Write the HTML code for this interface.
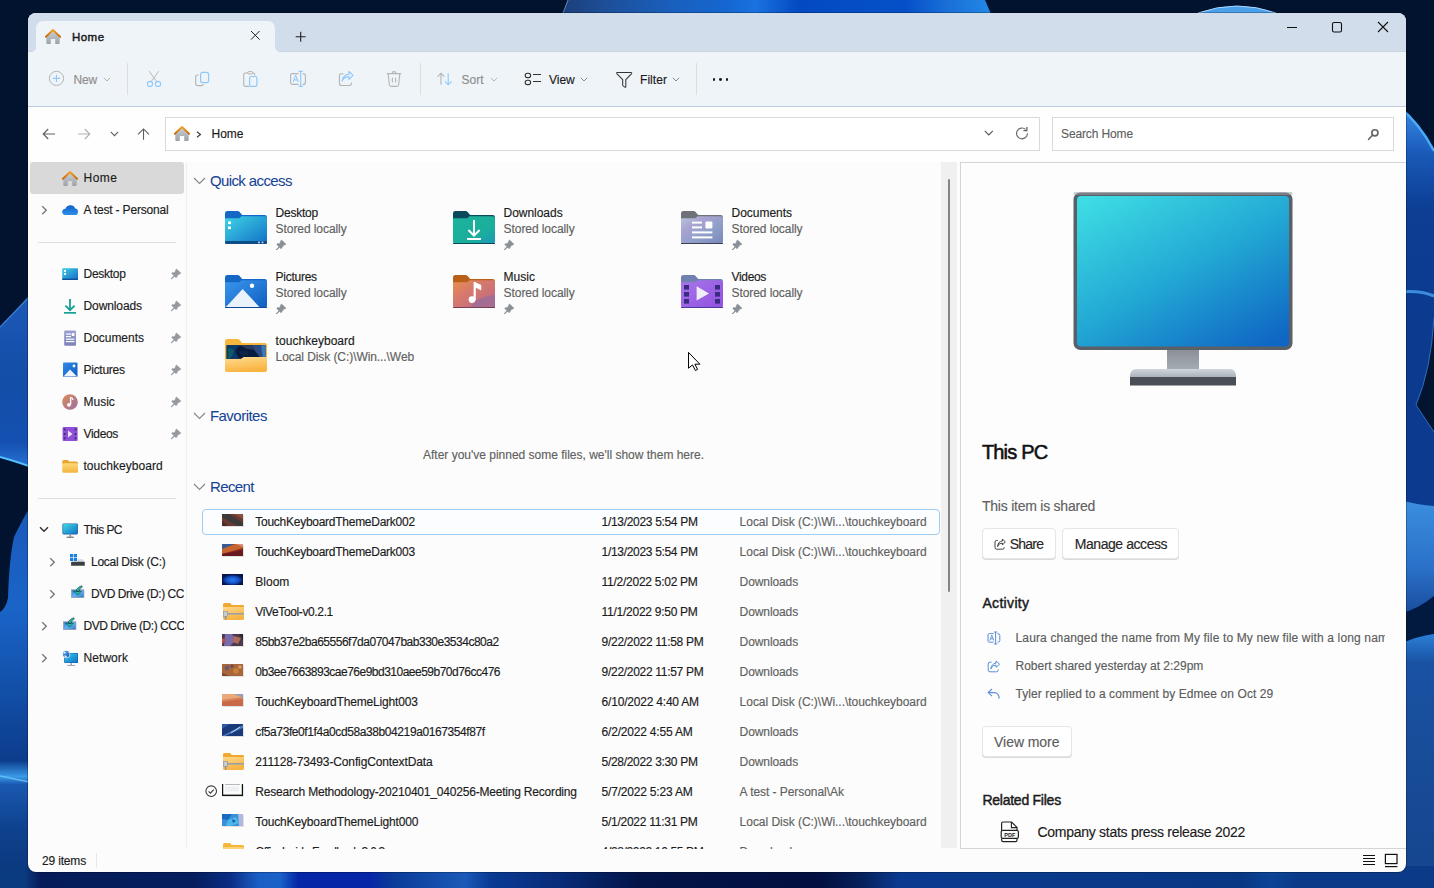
<!DOCTYPE html>
<html><head><meta charset="utf-8">
<style>
*{box-sizing:border-box;margin:0;padding:0}
html,body{width:1434px;height:888px;overflow:hidden}
body{font-family:"Liberation Sans",sans-serif;font-size:12px;color:#1b1b1b;position:relative;background:#021330}
.abs{position:absolute}
#wall{position:absolute;left:0;top:0;width:1434px;height:888px;overflow:hidden;background:#02132f}
#win{position:absolute;left:28px;top:13px;width:1378px;height:859px;border-radius:8px;overflow:hidden;background:#fcfcfc;box-shadow:0 0 0 1px rgba(0,0,0,.25)}
#tabbar{position:absolute;left:0;top:0;width:1378px;height:39px;background:#d1ddeb;border-bottom:1px solid #c9d5e5}
#tab{position:absolute;left:8px;top:7.5px;width:239px;height:32px;background:#eff4f9;border-radius:7px 7px 0 0}
#toolbar{position:absolute;left:0;top:39px;width:1378px;height:55px;background:#eff4f9;border-bottom:1px solid #bdcbdc}
#navrow{position:absolute;left:0;top:94px;width:1378px;height:55px;background:#fefefe}
#addr{position:absolute;left:165px;top:117px;width:875px;height:34px;border:1px solid #d9d9d9;background:#fff}
#search{position:absolute;left:1052px;top:117px;width:342px;height:34px;border:1px solid #d9d9d9;background:#fff}
#sideline{position:absolute;left:186px;top:162px;width:1px;height:686px;background:#efefef}
#sbar{position:absolute;left:941px;top:162px;width:16px;height:686px;background:#f0f0f0}
#details{position:absolute;left:960px;top:162px;width:446px;height:687px;border:1px solid #d4d4d4;border-right:none;background:#fdfdfd}
.clip{position:absolute;overflow:hidden}
.t{position:absolute;white-space:nowrap;line-height:16px;-webkit-text-stroke:0.15px currentColor}
</style></head><body>
<div id="wall"><svg width="1434" height="888" viewBox="0 0 1434 888" style="position:absolute;left:0;top:0">
<defs>
<linearGradient id="wp1" x1="0" y1="0" x2="0" y2="1"><stop offset="0" stop-color="#1d5ab8"/><stop offset=".5" stop-color="#134ea8"/><stop offset=".85" stop-color="#1450b0"/><stop offset="1" stop-color="#2a78d8"/></linearGradient>
<linearGradient id="wp2" x1="0" y1="490" x2="0" y2="888" gradientUnits="userSpaceOnUse"><stop offset="0" stop-color="#1a58b8"/><stop offset=".3" stop-color="#1a64c8"/><stop offset=".5" stop-color="#1250a8"/><stop offset=".68" stop-color="#0c3c8c"/><stop offset=".72" stop-color="#3a9ae8"/><stop offset=".74" stop-color="#1a58b0"/><stop offset=".85" stop-color="#0e428e"/><stop offset="1" stop-color="#0a3478"/></linearGradient>
<linearGradient id="wr1" x1="0" y1="106" x2="0" y2="888" gradientUnits="userSpaceOnUse"><stop offset="0" stop-color="#3a8ee8"/><stop offset=".06" stop-color="#1a5ab8"/><stop offset=".13" stop-color="#0c3e94"/><stop offset=".3" stop-color="#0b3a8e"/><stop offset="1" stop-color="#0b3a90"/></linearGradient>
<linearGradient id="wr2" x1="0" y1="0" x2="0" y2="1"><stop offset="0" stop-color="#3a8ee0"/><stop offset=".6" stop-color="#2a70c8"/><stop offset="1" stop-color="#1a4c9c"/></linearGradient>
<linearGradient id="wr3" x1="0" y1="0" x2="0" y2="1"><stop offset="0" stop-color="#2a80d8"/><stop offset=".12" stop-color="#1a52a2"/><stop offset="1" stop-color="#15468f"/></linearGradient>
<linearGradient id="wtop" x1="563" y1="0" x2="991" y2="0" gradientUnits="userSpaceOnUse"><stop offset="0" stop-color="#1c3f7a"/><stop offset=".1" stop-color="#1d4f98"/><stop offset=".25" stop-color="#1a5fbc"/><stop offset=".38" stop-color="#1466d0"/><stop offset=".45" stop-color="#1a72de"/><stop offset=".55" stop-color="#034ac2"/><stop offset=".8" stop-color="#0550c8"/><stop offset=".9" stop-color="#1a70d8"/><stop offset="1" stop-color="#2288e6"/></linearGradient>
<linearGradient id="wbot" x1="0" y1="0" x2="1434" y2="0" gradientUnits="userSpaceOnUse"><stop offset="0.0000" stop-color="#0a3a80"/><stop offset="0.0174" stop-color="#0a3a80"/><stop offset="0.0279" stop-color="#061c5a"/><stop offset="0.1360" stop-color="#061e5e"/><stop offset="0.1604" stop-color="#0a2c84"/><stop offset="0.1799" stop-color="#1a5ec4"/><stop offset="0.1953" stop-color="#1a62c8"/><stop offset="0.2078" stop-color="#0626a8"/><stop offset="0.2580" stop-color="#0626a8"/><stop offset="0.2720" stop-color="#0a3a98"/><stop offset="0.3243" stop-color="#1a5ab8"/><stop offset="0.3417" stop-color="#0a3a94"/><stop offset="0.3905" stop-color="#082c78"/><stop offset="0.4463" stop-color="#031448"/><stop offset="0.5718" stop-color="#020f40"/><stop offset="0.5997" stop-color="#06205a"/><stop offset="0.6276" stop-color="#0a3a90"/><stop offset="0.6974" stop-color="#0a3a8c"/><stop offset="0.8647" stop-color="#083784"/><stop offset="0.8856" stop-color="#0c4396"/><stop offset="0.9066" stop-color="#0a3a88"/><stop offset="1.0000" stop-color="#0a3a88"/></linearGradient>
</defs>
<rect width="1434" height="888" fill="#02132f"/>
<path d="M563 14 L568 0 H985 L991 14 Z" fill="url(#wtop)"/><path d="M563 13 L568 0" stroke="#7ab8f0" stroke-width="1" opacity=".7"/>
<path d="M1196 14 Q1237 -2 1278 14 Z" fill="#4aa0ea"/><path d="M1198 13 Q1237 -1 1276 13" stroke="#a8d8ff" stroke-width="1" fill="none"/>
<path d="M0 327 Q14 313 40 285 L40 470 Q18 462 0 457 Z" fill="url(#wp1)"/><path d="M0 327 Q14 313 40 285" stroke="#3a80d8" stroke-width="1.2" fill="none"/>
<path d="M0 457 Q18 462 40 470" stroke="#55c0ff" stroke-width="2" fill="none"/>
<path d="M40 490 Q22 520 14 537 Q9 560 8 598 Q6 608 0 612 L0 888 L40 888 Z" fill="url(#wp2)"/>
<path d="M0 776 Q14 779 40 784" stroke="#6ac8f8" stroke-width="1.5" fill="none" opacity=".8"/>
<path d="M1400 106 Q1420 122 1434 150 L1434 888 L1400 888 Z" fill="url(#wr1)"/>
<path d="M1400 108 Q1420 124 1434 151" stroke="#4aa8f8" stroke-width="2.5" fill="none"/>
<path d="M1400 292 Q1420 290 1434 296" stroke="#4aa0f0" stroke-width="3" fill="none" opacity=".8"/>
<path d="M1434 318 Q1431 370 1416 405 L1434 432 Z" fill="#02142f"/><path d="M1434 318 Q1431 370 1416 405 L1434 432" stroke="#3a7ad0" stroke-width="1" fill="none" opacity=".8"/>
<path d="M1400 500 Q1418 505 1434 506 L1434 596 Q1420 608 1400 614 Z" fill="url(#wr2)"/>
<path d="M1400 614 Q1420 608 1434 596 L1434 634 Q1418 636 1400 644 Z" fill="#021a40"/>
<path d="M1400 644 Q1418 636 1434 634 L1434 872 L1400 872 Z" fill="url(#wr3)"/>
<rect x="0" y="866" width="1434" height="22" fill="url(#wbot)"/>
</svg></div>
<div id="win">
  <div id="tabbar"></div>
  <div id="tab"></div>
  <div id="toolbar"></div>
  <div id="navrow"></div>
</div>
<div id="addr"></div>
<div id="search"></div>
<div id="sideline"></div>
<div id="sbar"></div>
<div id="details"></div>
<!-- 01_tabbar.py -->
<svg class="abs" style="left:31px;top:47px;" width="5" height="5" viewBox="0 0 5 5"><path d="M5 0 V5 H0 A5 5 0 0 0 5 0 Z" fill="#eff4f9"/></svg>
<svg class="abs" style="left:275px;top:47px;" width="5" height="5" viewBox="0 0 5 5"><path d="M0 0 V5 H5 A5 5 0 0 1 0 0 Z" fill="#eff4f9"/></svg>
<svg class="abs" style="left:45px;top:28px;" width="16" height="16" viewBox="0 0 16 16"><defs><g id="homeico"><linearGradient id="hroof" x1="0" y1="0" x2="0" y2="1"><stop offset="0" stop-color="#f2a126"/><stop offset="1" stop-color="#c86a0a"/></linearGradient>
<linearGradient id="hbody" x1="0" y1="0" x2="0" y2="1"><stop offset="0" stop-color="#c9cfd6"/><stop offset="1" stop-color="#9ea2a8"/></linearGradient>
<path d="M1.3 9.2 L8 3 L14.7 9.2 V15 Q14.7 16 13.7 16 H10.2 V11 H5.8 V16 H2.3 Q1.3 16 1.3 15 Z" fill="url(#hbody)"/>
<path d="M0.9 8.8 L8 2 L15.1 8.8" stroke="url(#hroof)" stroke-width="1.9" fill="none" stroke-linecap="round" stroke-linejoin="round"/></g></defs><use href="#homeico"/></svg>
<div class="t" style="left:72px;top:30px;font-size:11.5px;line-height:14px;color:#1b1b1b;letter-spacing:0.456px;-webkit-text-stroke:0.45px #1b1b1b">Home</div>
<svg class="abs" style="left:249.5px;top:30px;" width="12" height="12" viewBox="0 0 12 12"><path d="M1 1 L9.6 9.6 M9.6 1 L1 9.6" stroke="#222" stroke-width="1"/></svg>
<svg class="abs" style="left:295px;top:31px;" width="12" height="12" viewBox="0 0 12 12"><path d="M5.7 0.8 V10.8 M0.7 5.8 H10.7" stroke="#222" stroke-width="1.1"/></svg>
<div class="abs" style="left:1287px;top:27px;width:10px;height:1.2px;background:#111"></div>
<svg class="abs" style="left:1331px;top:21px;" width="12" height="12" viewBox="0 0 12 12"><rect x="1.5" y="1.5" width="9" height="9.5" rx="1.6" fill="none" stroke="#111" stroke-width="1.1"/></svg>
<svg class="abs" style="left:1377px;top:21px;" width="12" height="12" viewBox="0 0 12 12"><path d="M1 1 L11 11 M11 1 L1 11" stroke="#111" stroke-width="1.1"/></svg>
<!-- 02_toolbar.py -->
<svg class="abs" style="left:48px;top:70px;" width="17" height="17" viewBox="0 0 17 17"><circle cx="8.5" cy="8.4" r="7.1" fill="none" stroke="#b4b4b4" stroke-width="1"/><path d="M8.5 4.8 V12 M4.9 8.4 H12.1" stroke="#8fc8fb" stroke-width="1.1"/></svg>
<div class="t" style="left:73.5px;top:73px;font-size:12px;line-height:15px;color:#8e8e8e;letter-spacing:-0.169px;">New</div>
<svg class="abs" style="left:103px;top:77px;" width="8" height="5" viewBox="0 0 8 5"><path d="M0.8 0.8 L4 4 L7.2 0.8" fill="none" stroke="#b5b5b5" stroke-width="1"/></svg>
<div class="abs" style="left:127px;top:63px;width:1px;height:32px;background:#dedede"></div>
<svg class="abs" style="left:146px;top:70px;" width="16" height="17" viewBox="0 0 16 17"><path d="M3.2 1.2 L11.3 12.3 M12.7 1.2 L4.7 12.3" stroke="#b9b9b9" stroke-width="1"/><circle cx="4" cy="14" r="2.6" fill="none" stroke="#8fc8fb" stroke-width="1.1"/><circle cx="12" cy="14" r="2.6" fill="none" stroke="#8fc8fb" stroke-width="1.1"/></svg>
<svg class="abs" style="left:194px;top:70px;" width="17" height="17" viewBox="0 0 17 17"><path d="M4.5 5 H3.6 Q1.7 5 1.7 7 V13.4 Q1.7 15.6 4 15.6 H7.6 Q9.3 15.6 9.6 14" fill="none" stroke="#b4b4b4" stroke-width="1.1"/><rect x="6.6" y="2.4" width="8" height="10.2" rx="2" fill="none" stroke="#8fc8fb" stroke-width="1.2"/></svg>
<svg class="abs" style="left:242px;top:70px;" width="17" height="18" viewBox="0 0 17 18"><path d="M6 3 H3.4 Q1.7 3 1.7 4.8 V14.8 Q1.7 16.4 3.4 16.4 H7" fill="none" stroke="#b4b4b4" stroke-width="1.1"/><path d="M10.5 3 H11.2 Q12.7 3 12.7 4.6 V5.6" fill="none" stroke="#b4b4b4" stroke-width="1.1"/><rect x="5.8" y="1.6" width="5" height="2.4" rx="1.1" fill="none" stroke="#b4b4b4" stroke-width="1"/><rect x="7.6" y="6.5" width="7.3" height="9.9" rx="1.6" fill="none" stroke="#8fc8fb" stroke-width="1.2"/></svg>
<svg class="abs" style="left:289px;top:70px;" width="18" height="18" viewBox="0 0 18 18"><path d="M9.5 3.6 H3.2 Q1.6 3.6 1.6 5.2 V12.6 Q1.6 14.4 3.3 14.4 H9.5 M13.7 3.6 Q16.4 3.6 16.4 5.6 V12.4 Q16.4 14.4 14.2 14.4 H13.7" fill="none" stroke="#b4b4b4" stroke-width="1.1"/><path d="M11.7 1.4 V16.4 M9.6 1.4 H13.8 M9.6 16.4 H13.8" stroke="#8fc8fb" stroke-width="1.1"/><path d="M4 12 L6.6 5.2 L9.2 12 M4.9 9.9 H8.3" fill="none" stroke="#8fc8fb" stroke-width="1"/></svg>
<svg class="abs" style="left:337px;top:70px;" width="18" height="18" viewBox="0 0 18 18"><path d="M6.5 3.7 H4.4 Q2.4 3.7 2.4 5.8 V13.2 Q2.4 15.5 4.6 15.5 H12.2 Q14.6 15.5 14.6 13 V12.4" fill="none" stroke="#b4b4b4" stroke-width="1.1"/><path d="M5.1 11.2 Q6.2 7 12 6.6 V9.4 L16 5.3 L12 1.3 V4.1 Q6 4.6 5.1 11.2 Z" fill="none" stroke="#8fc8fb" stroke-width="1.1" stroke-linejoin="round"/></svg>
<svg class="abs" style="left:386px;top:70px;" width="16" height="18" viewBox="0 0 16 18"><path d="M0.8 3.6 H15.2 M6.2 3.4 Q6.2 1.6 8 1.6 Q9.8 1.6 9.8 3.4" fill="none" stroke="#b4b4b4" stroke-width="1.1"/><path d="M2.2 3.8 L3.3 14.8 Q3.5 16.4 5 16.4 H11 Q12.5 16.4 12.7 14.8 L13.8 3.8" fill="none" stroke="#b4b4b4" stroke-width="1.1"/><path d="M6.4 7.8 V12.6 M9.6 7.8 V12.6" stroke="#b4b4b4" stroke-width="1.1"/></svg>
<div class="abs" style="left:420px;top:63px;width:1px;height:32px;background:#dedede"></div>
<svg class="abs" style="left:435px;top:70px;" width="19" height="17" viewBox="0 0 19 17"><path d="M6 14.8 V3.2 M2.6 6.6 L6 3.2 L9.4 6.6" fill="none" stroke="#b4b4b4" stroke-width="1.1"/><path d="M13.2 3.2 V14.8 M9.8 11.4 L13.2 14.8 L16.6 11.4" fill="none" stroke="#8fc8fb" stroke-width="1.1"/></svg>
<div class="t" style="left:461.5px;top:73px;font-size:12px;line-height:15px;color:#8e8e8e;letter-spacing:-0.002px;">Sort</div>
<svg class="abs" style="left:489.5px;top:77px;" width="8" height="5" viewBox="0 0 8 5"><path d="M0.8 0.8 L4 4 L7.2 0.8" fill="none" stroke="#b5b5b5" stroke-width="1"/></svg>
<svg class="abs" style="left:523px;top:70px;" width="20" height="16" viewBox="0 0 20 16"><rect x="2.2" y="3.2" width="5.4" height="4.4" rx="2.2" fill="none" stroke="#333" stroke-width="1.1"/><rect x="2.2" y="10.2" width="5.4" height="4.4" rx="2.2" fill="none" stroke="#333" stroke-width="1.1"/><path d="M10 4.5 H18 M10 11.5 H18" stroke="#333" stroke-width="1"/></svg>
<div class="t" style="left:549px;top:73px;font-size:12px;line-height:15px;color:#1b1b1b;letter-spacing:-0.024px;">View</div>
<svg class="abs" style="left:580px;top:77px;" width="8" height="5" viewBox="0 0 8 5"><path d="M0.8 0.8 L4 4 L7.2 0.8" fill="none" stroke="#8a8a8a" stroke-width="1"/></svg>
<svg class="abs" style="left:615px;top:71px;" width="19" height="18" viewBox="0 0 19 18"><path d="M2.4 1.4 H15.6 Q17.4 1.4 16.4 2.8 L10.8 8.6 V15.6 Q10.8 16.6 9.9 16.1 L8.3 15.1 Q7.7 14.7 7.7 14 V8.6 L2 2.8 Q1 1.4 2.4 1.4 Z" fill="none" stroke="#333" stroke-width="1.05" stroke-linejoin="round"/></svg>
<div class="t" style="left:640px;top:73px;font-size:12px;line-height:15px;color:#1b1b1b;letter-spacing:0.055px;">Filter</div>
<svg class="abs" style="left:672px;top:77px;" width="8" height="5" viewBox="0 0 8 5"><path d="M0.8 0.8 L4 4 L7.2 0.8" fill="none" stroke="#8a8a8a" stroke-width="1"/></svg>
<div class="abs" style="left:696px;top:63px;width:1px;height:32px;background:#dedede"></div>
<div class="abs" style="left:712.6px;top:78.2px;width:2.8px;height:2.8px;background:#1a1a1a;border-radius:50%"></div>
<div class="abs" style="left:719.1px;top:78.2px;width:2.8px;height:2.8px;background:#1a1a1a;border-radius:50%"></div>
<div class="abs" style="left:725.6px;top:78.2px;width:2.8px;height:2.8px;background:#1a1a1a;border-radius:50%"></div>
<!-- 03_navrow.py -->
<svg class="abs" style="left:42px;top:128px;" width="14" height="12" viewBox="0 0 14 12"><path d="M1.2 6 H13 M6.2 1 L1.2 6 L6.2 11" fill="none" stroke="#5e5e5e" stroke-width="1.1"/></svg>
<svg class="abs" style="left:77px;top:128px;" width="14" height="12" viewBox="0 0 14 12"><path d="M1 6 H12.8 M7.8 1 L12.8 6 L7.8 11" fill="none" stroke="#aeb1b4" stroke-width="1.1"/></svg>
<svg class="abs" style="left:110px;top:131px;" width="9" height="6" viewBox="0 0 9 6"><path d="M0.8 0.8 L4.5 4.6 L8.2 0.8" fill="none" stroke="#5e5e5e" stroke-width="1.1"/></svg>
<svg class="abs" style="left:137px;top:128px;" width="13" height="12" viewBox="0 0 13 12"><path d="M6.5 11.8 V1 M1 6.3 L6.5 0.9 L12 6.3" fill="none" stroke="#5e5e5e" stroke-width="1.1"/></svg>
<svg class="abs" style="left:174px;top:125px;" width="16" height="16" viewBox="0 0 16 16"><use href="#homeico"/></svg>
<svg class="abs" style="left:196px;top:131px;" width="6" height="7" viewBox="0 0 6 7"><path d="M1 0.8 L4.4 3.5 L1 6.2" fill="none" stroke="#444" stroke-width="1.3"/></svg>
<div class="t" style="left:211.5px;top:127px;font-size:12px;line-height:15px;color:#1b1b1b;letter-spacing:-0.003px;">Home</div>
<svg class="abs" style="left:984px;top:130px;" width="10" height="7" viewBox="0 0 10 7"><path d="M0.8 0.8 L4.8 5 L8.8 0.8" fill="none" stroke="#555" stroke-width="1.1"/></svg>
<svg class="abs" style="left:1015px;top:126px;" width="15" height="15" viewBox="0 0 15 15"><path d="M12.4 7.2 A5.4 5.4 0 1 1 10.6 3.4" fill="none" stroke="#666" stroke-width="1.15"/><path d="M11.9 1 V4.6 H8.4" fill="none" stroke="#666" stroke-width="1.3"/></svg>
<div class="t" style="left:1061px;top:127px;font-size:12px;line-height:15px;color:#5f5f5f;letter-spacing:-0.124px;">Search Home</div>
<svg class="abs" style="left:1366px;top:127px;" width="14" height="14" viewBox="0 0 14 14"><circle cx="8.9" cy="5.8" r="3.05" fill="none" stroke="#666" stroke-width="1.7"/><path d="M6.7 8 L2.6 12.3" stroke="#666" stroke-width="1.6" stroke-linecap="round"/></svg>
<!-- 04_sidebar.py -->
<div class="abs" style="left:0;top:0;width:1434px;height:888px;clip-path:inset(162px 1250px 40px 28px)"><div class="abs" style="left:30px;top:162px;width:154px;height:32px;background:#d9d9d9;border-radius:3px"></div>
<svg class="abs" style="left:62px;top:170px;" width="16" height="16" viewBox="0 0 16 16"><use href="#homeico"/></svg>
<div class="t" style="left:83.5px;top:171px;font-size:12px;line-height:15px;color:#1b1b1b;letter-spacing:0.497px;">Home</div>
<svg class="abs" style="left:41px;top:205px;" width="8" height="11" viewBox="0 0 8 11"><path d="M1.3 1.2 L5.3 5.2 L1.3 9.2" fill="none" stroke="#767676" stroke-width="1.3"/></svg>
<svg class="abs" style="left:62px;top:201px;" width="16" height="16" viewBox="0 0 16 16"><defs><linearGradient id="cl1" x1="0" y1="0" x2="0" y2="1"><stop offset="0" stop-color="#0f5fc8"/><stop offset="1" stop-color="#2f8fea"/></linearGradient></defs><path d="M4 14 Q0.2 14 0.2 10.9 Q0.2 8 3.4 7.8 Q4.6 4.3 8.6 4.3 Q12 4.3 13.1 7.6 Q16 8 16 10.9 Q16 14 13 14 Z" fill="url(#cl1)"/></svg>
<div class="t" style="left:83.5px;top:203px;font-size:12px;line-height:15px;color:#1b1b1b;letter-spacing:-0.179px;">A test - Personal</div>
<svg class="abs" style="left:62px;top:266px;" width="16" height="16" viewBox="0 0 16 16"><defs><linearGradient id="dk1" x1="0" y1="0" x2="1" y2="1"><stop offset="0" stop-color="#3cd0e6"/><stop offset="1" stop-color="#1a68c6"/></linearGradient></defs><rect x="0.2" y="2.2" width="15.8" height="11.8" rx="1.2" fill="url(#dk1)"/><rect x="0.2" y="12.6" width="15.8" height="1.4" fill="#0f4f9a"/><rect x="2" y="4" width="2" height="1.8" fill="#fff"/><rect x="2" y="7" width="2" height="1.8" fill="#fff"/></svg>
<div class="t" style="left:83.5px;top:267px;font-size:12px;line-height:15px;color:#1b1b1b;letter-spacing:-0.260px;">Desktop</div>
<svg class="abs" style="left:171px;top:268px;" width="11" height="12" viewBox="0 0 11 12"><path d="M5.6 1 L10 5.2 L7.4 6.6 L5.4 9.6 L4.6 9.4 L0.8 5.5 L1 4.8 L3.9 4.4 L4.6 2 Z" fill="#949a9f" stroke="#949a9f" stroke-width=".5" stroke-linejoin="round"/><path d="M3.6 7.6 L0.6 10.6" stroke="#949a9f" stroke-width="1.3" stroke-linecap="round"/></svg>
<svg class="abs" style="left:62px;top:298px;" width="16" height="16" viewBox="0 0 16 16"><path d="M8 1 V12 M3.4 7.6 L8 12.2 L12.6 7.6" fill="none" stroke="#17a192" stroke-width="1.8"/><rect x="2" y="14" width="12" height="1.7" fill="#17a192"/></svg>
<div class="t" style="left:83.5px;top:299px;font-size:12px;line-height:15px;color:#1b1b1b;letter-spacing:-0.097px;">Downloads</div>
<svg class="abs" style="left:171px;top:300px;" width="11" height="12" viewBox="0 0 11 12"><path d="M5.6 1 L10 5.2 L7.4 6.6 L5.4 9.6 L4.6 9.4 L0.8 5.5 L1 4.8 L3.9 4.4 L4.6 2 Z" fill="#949a9f" stroke="#949a9f" stroke-width=".5" stroke-linejoin="round"/><path d="M3.6 7.6 L0.6 10.6" stroke="#949a9f" stroke-width="1.3" stroke-linecap="round"/></svg>
<svg class="abs" style="left:62px;top:330px;" width="16" height="16" viewBox="0 0 16 16"><defs><linearGradient id="dc1" x1="0" y1="0" x2="0" y2="1"><stop offset="0" stop-color="#9aa0d0"/><stop offset="1" stop-color="#7b82b8"/></linearGradient></defs><rect x="2.2" y="0.5" width="11.8" height="15.3" rx="1.2" fill="url(#dc1)"/><rect x="4" y="3.5" width="5" height="1.2" fill="#fff"/><rect x="9.8" y="3" width="2.6" height="3" fill="#fff"/><rect x="4" y="6" width="5" height="1.2" fill="#fff"/><rect x="4" y="8.6" width="8.4" height="1.2" fill="#fff"/><rect x="4" y="11" width="8.4" height="1.2" fill="#fff"/></svg>
<div class="t" style="left:83.5px;top:331px;font-size:12px;line-height:15px;color:#1b1b1b;letter-spacing:-0.033px;">Documents</div>
<svg class="abs" style="left:171px;top:332px;" width="11" height="12" viewBox="0 0 11 12"><path d="M5.6 1 L10 5.2 L7.4 6.6 L5.4 9.6 L4.6 9.4 L0.8 5.5 L1 4.8 L3.9 4.4 L4.6 2 Z" fill="#949a9f" stroke="#949a9f" stroke-width=".5" stroke-linejoin="round"/><path d="M3.6 7.6 L0.6 10.6" stroke="#949a9f" stroke-width="1.3" stroke-linecap="round"/></svg>
<svg class="abs" style="left:62px;top:362px;" width="16" height="16" viewBox="0 0 16 16"><defs><linearGradient id="pc1" x1="0" y1="0" x2="1" y2="1"><stop offset="0" stop-color="#2f8ae8"/><stop offset="1" stop-color="#105cc0"/></linearGradient></defs><rect x="1" y="0.6" width="14.5" height="14.5" rx="1" fill="url(#pc1)"/><path d="M1.5 14.6 L8 7.4 L15 14.6 Z" fill="#eef4fb"/><circle cx="12" cy="4" r="1.4" fill="#fff"/></svg>
<div class="t" style="left:83.5px;top:363px;font-size:12px;line-height:15px;color:#1b1b1b;letter-spacing:-0.269px;">Pictures</div>
<svg class="abs" style="left:171px;top:364px;" width="11" height="12" viewBox="0 0 11 12"><path d="M5.6 1 L10 5.2 L7.4 6.6 L5.4 9.6 L4.6 9.4 L0.8 5.5 L1 4.8 L3.9 4.4 L4.6 2 Z" fill="#949a9f" stroke="#949a9f" stroke-width=".5" stroke-linejoin="round"/><path d="M3.6 7.6 L0.6 10.6" stroke="#949a9f" stroke-width="1.3" stroke-linecap="round"/></svg>
<svg class="abs" style="left:62px;top:394px;" width="16" height="16" viewBox="0 0 16 16"><defs><linearGradient id="mu1" x1="0" y1="0" x2="1" y2="1"><stop offset="0" stop-color="#e08a55"/><stop offset="1" stop-color="#9a6fa8"/></linearGradient></defs><circle cx="8" cy="8" r="7.8" fill="url(#mu1)"/><path d="M8.6 3.2 V10.6" stroke="#fff" stroke-width="1.4"/><path d="M8.6 3.2 Q11 4 11 6" stroke="#fff" stroke-width="1.2" fill="none"/><circle cx="6.9" cy="10.8" r="1.9" fill="#fff"/></svg>
<div class="t" style="left:83.5px;top:395px;font-size:12px;line-height:15px;color:#1b1b1b;letter-spacing:-0.007px;">Music</div>
<svg class="abs" style="left:171px;top:396px;" width="11" height="12" viewBox="0 0 11 12"><path d="M5.6 1 L10 5.2 L7.4 6.6 L5.4 9.6 L4.6 9.4 L0.8 5.5 L1 4.8 L3.9 4.4 L4.6 2 Z" fill="#949a9f" stroke="#949a9f" stroke-width=".5" stroke-linejoin="round"/><path d="M3.6 7.6 L0.6 10.6" stroke="#949a9f" stroke-width="1.3" stroke-linecap="round"/></svg>
<svg class="abs" style="left:62px;top:426px;" width="16" height="16" viewBox="0 0 16 16"><rect x="0.6" y="1" width="15" height="14" rx="1" fill="#8e4fd8"/><g fill="#3a2a6a"><rect x="1.8" y="2.6" width="1.8" height="1.8"/><rect x="1.8" y="7" width="1.8" height="1.8"/><rect x="1.8" y="11.4" width="1.8" height="1.8"/><rect x="12.6" y="2.6" width="1.8" height="1.8"/><rect x="12.6" y="7" width="1.8" height="1.8"/><rect x="12.6" y="11.4" width="1.8" height="1.8"/></g><path d="M6 4.6 L10.6 8 L6 11.4 Z" fill="#e9e4f8"/></svg>
<div class="t" style="left:83.5px;top:427px;font-size:12px;line-height:15px;color:#1b1b1b;letter-spacing:-0.329px;">Videos</div>
<svg class="abs" style="left:171px;top:428px;" width="11" height="12" viewBox="0 0 11 12"><path d="M5.6 1 L10 5.2 L7.4 6.6 L5.4 9.6 L4.6 9.4 L0.8 5.5 L1 4.8 L3.9 4.4 L4.6 2 Z" fill="#949a9f" stroke="#949a9f" stroke-width=".5" stroke-linejoin="round"/><path d="M3.6 7.6 L0.6 10.6" stroke="#949a9f" stroke-width="1.3" stroke-linecap="round"/></svg>
<svg class="abs" style="left:62px;top:458px;" width="16" height="16" viewBox="0 0 16 16"><defs><linearGradient id="fo1" x1="0" y1="0" x2="0" y2="1"><stop offset="0" stop-color="#ffd978"/><stop offset="1" stop-color="#f3b43e"/></linearGradient></defs><path d="M0.3 3.6 Q0.3 2 1.8 2 H5.6 L7.2 3.4 H14.4 Q16 3.4 16 5 V6 H0.3 Z" fill="#e8a52c"/><rect x="0.3" y="5.2" width="15.7" height="9.6" rx="1.2" fill="url(#fo1)"/></svg>
<div class="t" style="left:83.5px;top:459px;font-size:12px;line-height:15px;color:#1b1b1b;letter-spacing:0.037px;">touchkeyboard</div>
<svg class="abs" style="left:39px;top:526px;" width="10" height="7" viewBox="0 0 10 7"><path d="M1 1.2 L5 5.2 L9 1.2" fill="none" stroke="#333" stroke-width="1.4"/></svg>
<svg class="abs" style="left:62px;top:523px;" width="16" height="16" viewBox="0 0 16 16"><defs><linearGradient id="tp1" x1="0" y1="0" x2="1" y2="1"><stop offset="0" stop-color="#3dd6e2"/><stop offset="1" stop-color="#1372c8"/></linearGradient></defs><rect x="0.4" y="0.4" width="15.5" height="11" rx="1.4" fill="#1d5aa6"/><rect x="1.1" y="1.1" width="14.1" height="9.6" rx=".6" fill="url(#tp1)"/><rect x="7.2" y="11.4" width="2" height="2.4" fill="#9aa0a6"/><rect x="4.6" y="13.6" width="7.2" height="1.4" fill="#7d848c"/></svg>
<div class="t" style="left:83.5px;top:523px;font-size:12px;line-height:15px;color:#1b1b1b;letter-spacing:-0.611px;">This PC</div>
<svg class="abs" style="left:49px;top:557px;" width="8" height="11" viewBox="0 0 8 11"><path d="M1.3 1.2 L5.3 5.2 L1.3 9.2" fill="none" stroke="#767676" stroke-width="1.3"/></svg>
<svg class="abs" style="left:70px;top:554px;" width="16" height="16" viewBox="0 0 16 16"><g fill="#1a7fe0"><rect x="0" y="0" width="3.2" height="3.2"/><rect x="3.8" y="0" width="3.2" height="3.2"/><rect x="0" y="3.8" width="3.2" height="3.2"/><rect x="3.8" y="3.8" width="3.2" height="3.2"/></g><path d="M7.4 5.2 H12.8 L14.4 7.8 H7.4 Z" fill="#d4d8dc"/><rect x="1.1" y="7.7" width="13.7" height="4" rx=".5" fill="#3a3f44"/></svg>
<div class="t" style="left:91px;top:555px;font-size:12px;line-height:15px;color:#1b1b1b;letter-spacing:-0.279px;">Local Disk (C:)</div>
<svg class="abs" style="left:49px;top:589px;" width="8" height="11" viewBox="0 0 8 11"><path d="M1.3 1.2 L5.3 5.2 L1.3 9.2" fill="none" stroke="#767676" stroke-width="1.3"/></svg>
<svg class="abs" style="left:71px;top:585px;" width="16" height="16" viewBox="0 0 16 16"><defs><linearGradient id="dv1" x1="0" y1="0" x2="1" y2="1"><stop offset="0" stop-color="#2f7fd8"/><stop offset=".5" stop-color="#62b0f0"/><stop offset="1" stop-color="#2a72c8"/></linearGradient></defs><rect x="0.5" y="4.8" width="12.4" height="7.8" fill="url(#dv1)" stroke="#8a9aa8" stroke-width=".7"/><path d="M2.6 6.2 L10.4 6.2 L6.5 10.1 Z M5.2 6.5 Q5.4 2.2 10.9 0.8 L11.3 2.3 Q8.2 3 7.8 6.5 Z" fill="#1fbcac" stroke="#16383a" stroke-width=".6" stroke-linejoin="round"/></svg>
<div class="t" style="left:91px;top:587px;font-size:12px;line-height:15px;color:#1b1b1b;letter-spacing:-0.450px;">DVD Drive (D:) CCCOMA_X64FRE_EN-US_DV9</div>
<svg class="abs" style="left:41px;top:621px;" width="8" height="11" viewBox="0 0 8 11"><path d="M1.3 1.2 L5.3 5.2 L1.3 9.2" fill="none" stroke="#767676" stroke-width="1.3"/></svg>
<svg class="abs" style="left:63px;top:617px;" width="16" height="16" viewBox="0 0 16 16"><defs><linearGradient id="dv1" x1="0" y1="0" x2="1" y2="1"><stop offset="0" stop-color="#2f7fd8"/><stop offset=".5" stop-color="#62b0f0"/><stop offset="1" stop-color="#2a72c8"/></linearGradient></defs><rect x="0.5" y="4.8" width="12.4" height="7.8" fill="url(#dv1)" stroke="#8a9aa8" stroke-width=".7"/><path d="M2.6 6.2 L10.4 6.2 L6.5 10.1 Z M5.2 6.5 Q5.4 2.2 10.9 0.8 L11.3 2.3 Q8.2 3 7.8 6.5 Z" fill="#1fbcac" stroke="#16383a" stroke-width=".6" stroke-linejoin="round"/></svg>
<div class="t" style="left:83.5px;top:619px;font-size:12px;line-height:15px;color:#1b1b1b;letter-spacing:-0.450px;">DVD Drive (D:) CCCOMA_X64FRE_EN-US_DV9</div>
<svg class="abs" style="left:41px;top:653px;" width="8" height="11" viewBox="0 0 8 11"><path d="M1.3 1.2 L5.3 5.2 L1.3 9.2" fill="none" stroke="#767676" stroke-width="1.3"/></svg>
<svg class="abs" style="left:62px;top:650px;" width="16" height="16" viewBox="0 0 16 16"><defs><linearGradient id="nw1" x1="0" y1="0" x2="1" y2="1"><stop offset="0" stop-color="#2ccbe6"/><stop offset="1" stop-color="#1274cc"/></linearGradient><linearGradient id="nw2" x1="0" y1="0" x2="1" y2="1"><stop offset="0" stop-color="#6ab0f0"/><stop offset=".5" stop-color="#3a84d8"/><stop offset="1" stop-color="#1a4a9a"/></linearGradient></defs><rect x="2.2" y="2.9" width="14" height="10.2" rx="1.1" fill="#1a58a8"/><rect x="2.9" y="3.6" width="12.6" height="8.8" rx=".6" fill="url(#nw1)"/><rect x="8.4" y="13.1" width="1.6" height="2.1" fill="#9aa4ae"/><rect x="5.2" y="14.9" width="8" height="1" fill="#9aa4ae"/><circle cx="4.2" cy="4.1" r="4.1" fill="#fcfcfc"/><circle cx="4.2" cy="4.1" r="3.4" fill="url(#nw2)"/><path d="M1.6 2.4 Q3 1.2 4 2.4 Q3.2 3.6 1.4 3.6 Z M2.4 5.6 Q4 5 5 6.6 Q4 7.6 2.6 6.8 Z M5.6 1.4 Q6.8 2 7 3 Q6 3 5.6 1.4 Z" fill="#e8f4ff"/></svg>
<div class="t" style="left:83.5px;top:651px;font-size:12px;line-height:15px;color:#1b1b1b;letter-spacing:0.070px;">Network</div>
</div><div class="abs" style="left:38px;top:242px;width:138px;height:1px;background:#dedede"></div>
<div class="abs" style="left:38px;top:498px;width:138px;height:1px;background:#dedede"></div>
<!-- 05_quick.py -->
<svg class="abs" style="left:193px;top:177px;" width="13" height="8" viewBox="0 0 13 8"><path d="M1 1 L6.5 6.5 L12 1" fill="none" stroke="#858585" stroke-width="1.1"/></svg>
<div class="t" style="left:209.9px;top:171px;font-size:15px;line-height:19px;color:#174396;letter-spacing:-0.600px;-webkit-text-stroke:0.05px currentColor">Quick access</div>
<svg class="abs" style="left:193px;top:412px;" width="13" height="8" viewBox="0 0 13 8"><path d="M1 1 L6.5 6.5 L12 1" fill="none" stroke="#858585" stroke-width="1.1"/></svg>
<div class="t" style="left:209.9px;top:406px;font-size:15px;line-height:19px;color:#174396;letter-spacing:-0.521px;-webkit-text-stroke:0.05px currentColor">Favorites</div>
<svg class="abs" style="left:193px;top:483px;" width="13" height="8" viewBox="0 0 13 8"><path d="M1 1 L6.5 6.5 L12 1" fill="none" stroke="#858585" stroke-width="1.1"/></svg>
<div class="t" style="left:209.9px;top:477px;font-size:15px;line-height:19px;color:#174396;letter-spacing:-0.588px;-webkit-text-stroke:0.05px currentColor">Recent</div>
<svg class="abs" style="left:225px;top:211px" width="42" height="33" viewBox="0 0 42 33"><defs><linearGradient id="qd" x1="0" y1="0" x2="1" y2="1"><stop offset="0" stop-color="#40d4e6"/><stop offset="1" stop-color="#1170c6"/></linearGradient></defs><path d="M0 2.4 Q0 0 2.4 0 H12.6 Q13.8 0 14.6 0.9 L17.2 4 H39.6 Q42 4 42 6.4 V12 H0 Z" fill="#1467c4"/><path d="M0 7.2 H14.2 L16.6 5.2 H39.8 Q42 5.2 42 7.4 V30.6 Q42 33 39.6 33 H2.4 Q0 33 0 30.6 Z" fill="url(#qd)"/><rect x="0" y="30" width="42" height="3" rx="1" fill="#0d4e86"/><rect x="3" y="10.5" width="3" height="2.6" fill="#fff"/><rect x="3" y="15.5" width="3" height="2.6" fill="#fff"/><rect x="33" y="30.6" width="1.8" height="1.6" fill="#cfd8ff"/><rect x="36.6" y="30.6" width="1.8" height="1.6" fill="#cfd8ff"/></svg>
<svg class="abs" style="left:453px;top:211px" width="42" height="33" viewBox="0 0 42 33"><defs><linearGradient id="qdl" x1="0" y1="0" x2="1" y2="1"><stop offset="0" stop-color="#1cb39c"/><stop offset="0.65" stop-color="#1aae9c"/><stop offset="1" stop-color="#1f96b8"/></linearGradient></defs><path d="M0 2.4 Q0 0 2.4 0 H12.6 Q13.8 0 14.6 0.9 L17.2 4 H39.6 Q42 4 42 6.4 V12 H0 Z" fill="#0b4a5e"/><path d="M0 7.2 H14.2 L16.6 5.2 H39.8 Q42 5.2 42 7.4 V30.6 Q42 33 39.6 33 H2.4 Q0 33 0 30.6 Z" fill="url(#qdl)"/><rect x="0" y="32" width="42" height="1" fill="#0b4a5e"/><path d="M21 9 V24.6 M15.4 19 L21 24.6 L26.6 19" fill="none" stroke="#fff" stroke-width="2"/><rect x="14" y="27" width="14" height="2" fill="#fff"/></svg>
<svg class="abs" style="left:681px;top:211px" width="42" height="33" viewBox="0 0 42 33"><defs><linearGradient id="qdc" x1="0" y1="0" x2="1" y2="1"><stop offset="0" stop-color="#b9c6dc"/><stop offset="0.3" stop-color="#a9a2d2"/><stop offset="0.6" stop-color="#8fa0c8"/><stop offset="1" stop-color="#7a86bc"/></linearGradient></defs><path d="M0 2.4 Q0 0 2.4 0 H12.6 Q13.8 0 14.6 0.9 L17.2 4 H39.6 Q42 4 42 6.4 V12 H0 Z" fill="#6e7178"/><path d="M0 7.2 H14.2 L16.6 5.2 H39.8 Q42 5.2 42 7.4 V30.6 Q42 33 39.6 33 H2.4 Q0 33 0 30.6 Z" fill="url(#qdc)"/><rect x="0" y="32" width="42" height="1" fill="#3c4250"/><g fill="#fff"><rect x="11" y="10.6" width="10" height="2"/><rect x="24.4" y="10.6" width="7" height="6.8" rx="1"/><rect x="11" y="15.4" width="10" height="2"/><rect x="11" y="20.4" width="20.4" height="2"/><rect x="11" y="25.4" width="20.4" height="2"/></g></svg>
<svg class="abs" style="left:225px;top:275px" width="42" height="33" viewBox="0 0 42 33"><defs><linearGradient id="qp" x1="0" y1="0" x2="1" y2="1"><stop offset="0" stop-color="#3a96ec"/><stop offset="1" stop-color="#0f5ec0"/></linearGradient></defs><path d="M0 2.4 Q0 0 2.4 0 H12.6 Q13.8 0 14.6 0.9 L17.2 4 H39.6 Q42 4 42 6.4 V12 H0 Z" fill="#1467c4"/><path d="M0 7.2 H14.2 L16.6 5.2 H39.8 Q42 5.2 42 7.4 V30.6 Q42 33 39.6 33 H2.4 Q0 33 0 30.6 Z" fill="url(#qp)"/><path d="M1 32 L17.6 14 L34.4 32 Z" fill="#eaf2fb"/><circle cx="27" cy="10.8" r="2.2" fill="#fff"/><rect x="0" y="32" width="42" height="1" fill="#0c4a98"/></svg>
<svg class="abs" style="left:453px;top:275px" width="42" height="33" viewBox="0 0 42 33"><defs><linearGradient id="qm" x1="0" y1="0" x2="1" y2="1"><stop offset="0" stop-color="#e89050"/><stop offset="0.35" stop-color="#d87a6a"/><stop offset="0.7" stop-color="#c8707a"/><stop offset="1" stop-color="#9a6aa0"/></linearGradient></defs><path d="M0 2.4 Q0 0 2.4 0 H12.6 Q13.8 0 14.6 0.9 L17.2 4 H39.6 Q42 4 42 6.4 V12 H0 Z" fill="#b8601a"/><path d="M0 7.2 H14.2 L16.6 5.2 H39.8 Q42 5.2 42 7.4 V30.6 Q42 33 39.6 33 H2.4 Q0 33 0 30.6 Z" fill="url(#qm)"/><path d="M17 33 Q22 22 42 20 V33 Z" fill="#a56c94"/><rect x="0" y="32" width="42" height="1" fill="#7a4050"/><rect x="20.6" y="7" width="2.2" height="18" fill="#fff"/><path d="M21.6 7 L28.2 10 V15.4 L22 12.2 Z" fill="#fff"/><circle cx="19" cy="24.6" r="3.4" fill="#fff"/></svg>
<svg class="abs" style="left:681px;top:275px" width="42" height="33" viewBox="0 0 42 33"><defs><linearGradient id="qv" x1="0" y1="0" x2="1" y2="1"><stop offset="0" stop-color="#a976ea"/><stop offset="1" stop-color="#9050e0"/></linearGradient></defs><path d="M0 2.4 Q0 0 2.4 0 H12.6 Q13.8 0 14.6 0.9 L17.2 4 H39.6 Q42 4 42 6.4 V12 H0 Z" fill="#7080b0"/><path d="M0 7.2 H14.2 L16.6 5.2 H39.8 Q42 5.2 42 7.4 V30.6 Q42 33 39.6 33 H2.4 Q0 33 0 30.6 Z" fill="url(#qv)"/><g fill="#3a2a80"><rect x="3" y="10" width="5" height="4.6"/><rect x="3" y="17" width="5" height="4.6"/><rect x="3" y="24" width="5" height="4.6"/><rect x="34" y="10" width="5" height="4.6"/><rect x="34" y="17" width="5" height="4.6"/><rect x="34" y="24" width="5" height="4.6"/></g><path d="M15.6 11.2 L28 18.4 L15.6 25.6 Z" fill="#f0eef6"/><rect x="0" y="32" width="42" height="1" fill="#4a3a9a"/></svg>
<svg class="abs" style="left:225px;top:339px" width="42" height="33" viewBox="0 0 42 33"><defs><linearGradient id="qt" x1="0" y1="0" x2="0.3" y2="1"><stop offset="0" stop-color="#ffdc92"/><stop offset="1" stop-color="#f9b440"/></linearGradient></defs><path d="M0 2.4 Q0 0 2.4 0 H12.6 Q13.8 0 14.6 0.9 L17.2 4 H39.6 Q42 4 42 6.4 V12 H0 Z" fill="#f6b73c"/><path d="M0 7.2 H14.2 L16.6 5.2 H39.8 Q42 5.2 42 7.4 V30.6 Q42 33 39.6 33 H2.4 Q0 33 0 30.6 Z" fill="#f6b73c"/><defs><linearGradient id="qti" x1="0" y1="0" x2="1" y2="0"><stop offset="0" stop-color="#0a3f66"/><stop offset="0.3" stop-color="#0d5a6a"/><stop offset="0.5" stop-color="#061a3a"/><stop offset="0.75" stop-color="#2a4a80"/><stop offset="1" stop-color="#3a80c8"/></linearGradient></defs><rect x="1.6" y="6.2" width="38.8" height="13.6" fill="#071c3c"/><path d="M1.6 6.2 H14 L10 12 L14 19.8 H1.6 Z" fill="#0a3a6a"/><path d="M3 10 Q7 8 9 12 Q8 16 5 19.8 H3 Z" fill="#0f5a6a"/><path d="M15 6.2 H27 L31 11 L22 10 Z" fill="#2a3a58"/><path d="M27 6.2 H40.4 V19.8 H36 L30 12 Z" fill="#2a4a80"/><path d="M36 6.2 H40.4 V19.8 H38 Z" fill="#3a78c0"/><path d="M14 12 L22 11 L24 16 L16 17 Z" fill="#0a2548"/><path d="M0 20 H16 L18.6 18 H42 V30.6 Q42 33 39.6 33 H2.4 Q0 33 0 30.6 Z" fill="url(#qt)"/></svg>
<div class="t" style="left:275.6px;top:206px;font-size:12px;line-height:15px;color:#1b1b1b;letter-spacing:-0.260px;">Desktop</div>
<div class="t" style="left:275.6px;top:222px;font-size:12px;line-height:15px;color:#616161;letter-spacing:-0.074px;">Stored locally</div>
<svg class="abs" style="left:275.6px;top:239px;" width="11" height="11" viewBox="0 0 11 11"><path d="M5.6 1 L10 5.2 L7.4 6.6 L5.4 9.6 L4.6 9.4 L0.8 5.5 L1 4.8 L3.9 4.4 L4.6 2 Z" fill="#8a9097" stroke="#8a9097" stroke-width=".5" stroke-linejoin="round"/><path d="M3.6 7.6 L0.6 10.6" stroke="#8a9097" stroke-width="1.3" stroke-linecap="round"/></svg>
<div class="t" style="left:503.6px;top:206px;font-size:12px;line-height:15px;color:#1b1b1b;letter-spacing:-0.041px;">Downloads</div>
<div class="t" style="left:503.6px;top:222px;font-size:12px;line-height:15px;color:#616161;letter-spacing:-0.074px;">Stored locally</div>
<svg class="abs" style="left:503.6px;top:239px;" width="11" height="11" viewBox="0 0 11 11"><path d="M5.6 1 L10 5.2 L7.4 6.6 L5.4 9.6 L4.6 9.4 L0.8 5.5 L1 4.8 L3.9 4.4 L4.6 2 Z" fill="#8a9097" stroke="#8a9097" stroke-width=".5" stroke-linejoin="round"/><path d="M3.6 7.6 L0.6 10.6" stroke="#8a9097" stroke-width="1.3" stroke-linecap="round"/></svg>
<div class="t" style="left:731.5px;top:206px;font-size:12px;line-height:15px;color:#1b1b1b;letter-spacing:-0.021px;">Documents</div>
<div class="t" style="left:731.5px;top:222px;font-size:12px;line-height:15px;color:#616161;letter-spacing:-0.074px;">Stored locally</div>
<svg class="abs" style="left:731.5px;top:239px;" width="11" height="11" viewBox="0 0 11 11"><path d="M5.6 1 L10 5.2 L7.4 6.6 L5.4 9.6 L4.6 9.4 L0.8 5.5 L1 4.8 L3.9 4.4 L4.6 2 Z" fill="#8a9097" stroke="#8a9097" stroke-width=".5" stroke-linejoin="round"/><path d="M3.6 7.6 L0.6 10.6" stroke="#8a9097" stroke-width="1.3" stroke-linecap="round"/></svg>
<div class="t" style="left:275.6px;top:270px;font-size:12px;line-height:15px;color:#1b1b1b;letter-spacing:-0.269px;">Pictures</div>
<div class="t" style="left:275.6px;top:286px;font-size:12px;line-height:15px;color:#616161;letter-spacing:-0.074px;">Stored locally</div>
<svg class="abs" style="left:275.6px;top:303px;" width="11" height="11" viewBox="0 0 11 11"><path d="M5.6 1 L10 5.2 L7.4 6.6 L5.4 9.6 L4.6 9.4 L0.8 5.5 L1 4.8 L3.9 4.4 L4.6 2 Z" fill="#8a9097" stroke="#8a9097" stroke-width=".5" stroke-linejoin="round"/><path d="M3.6 7.6 L0.6 10.6" stroke="#8a9097" stroke-width="1.3" stroke-linecap="round"/></svg>
<div class="t" style="left:503.6px;top:270px;font-size:12px;line-height:15px;color:#1b1b1b;letter-spacing:0.013px;">Music</div>
<div class="t" style="left:503.6px;top:286px;font-size:12px;line-height:15px;color:#616161;letter-spacing:-0.074px;">Stored locally</div>
<svg class="abs" style="left:503.6px;top:303px;" width="11" height="11" viewBox="0 0 11 11"><path d="M5.6 1 L10 5.2 L7.4 6.6 L5.4 9.6 L4.6 9.4 L0.8 5.5 L1 4.8 L3.9 4.4 L4.6 2 Z" fill="#8a9097" stroke="#8a9097" stroke-width=".5" stroke-linejoin="round"/><path d="M3.6 7.6 L0.6 10.6" stroke="#8a9097" stroke-width="1.3" stroke-linecap="round"/></svg>
<div class="t" style="left:731.5px;top:270px;font-size:12px;line-height:15px;color:#1b1b1b;letter-spacing:-0.329px;">Videos</div>
<div class="t" style="left:731.5px;top:286px;font-size:12px;line-height:15px;color:#616161;letter-spacing:-0.074px;">Stored locally</div>
<svg class="abs" style="left:731.5px;top:303px;" width="11" height="11" viewBox="0 0 11 11"><path d="M5.6 1 L10 5.2 L7.4 6.6 L5.4 9.6 L4.6 9.4 L0.8 5.5 L1 4.8 L3.9 4.4 L4.6 2 Z" fill="#8a9097" stroke="#8a9097" stroke-width=".5" stroke-linejoin="round"/><path d="M3.6 7.6 L0.6 10.6" stroke="#8a9097" stroke-width="1.3" stroke-linecap="round"/></svg>
<div class="t" style="left:275.6px;top:334px;font-size:12px;line-height:15px;color:#1b1b1b;letter-spacing:0.037px;">touchkeyboard</div>
<div class="t" style="left:275.6px;top:350px;font-size:12px;line-height:15px;color:#616161;letter-spacing:-0.076px;">Local Disk (C:)\Win...\Web</div>
<div class="t" style="left:423px;top:448px;font-size:12px;line-height:15px;color:#616161;letter-spacing:-0.007px;">After you&#x27;ve pinned some files, we&#x27;ll show them here.</div>
<!-- 06_recent.py -->
<div class="abs" style="left:202px;top:509px;width:738px;height:26px;border:1px solid #9fcdf2;border-radius:4px;background:#fcfdfe"></div>
<div class="abs" style="left:0;top:0;width:1434px;height:888px;clip-path:inset(162px 494px 39px 187px)"><svg class="abs" style="left:222px;top:514px;" width="22" height="13" viewBox="0 0 22 13"><rect x="1" y="1" width="21" height="12" fill="#cfcfcf" opacity=".6"/><rect width="21" height="12" fill="#6a3a32"/><path d="M0 0 H7 L21 9 V12 H15 L0 3 Z" fill="#3c3a38"/><path d="M12 0 H21 V5 Z" fill="#8a5040"/><path d="M0 7 L6 12 H0 Z" fill="#4a2a28"/></svg>
<div class="t" style="left:255.3px;top:515px;font-size:12px;line-height:15px;color:#1b1b1b;letter-spacing:-0.264px;">TouchKeyboardThemeDark002</div>
<div class="t" style="left:601.6px;top:515px;font-size:12px;line-height:15px;color:#1b1b1b;letter-spacing:-0.318px;">1/13/2023 5:54 PM</div>
<div class="t" style="left:739.6px;top:515px;font-size:12px;line-height:15px;color:#616161;letter-spacing:-0.030px;">Local Disk (C:)\Wi...\touchkeyboard</div>
<svg class="abs" style="left:222px;top:544px;" width="22" height="13" viewBox="0 0 22 13"><rect x="1" y="1" width="21" height="12" fill="#cfcfcf" opacity=".6"/><rect width="21" height="12" fill="#8a2a22"/><path d="M0 0 H12 L0 7 Z" fill="#3a5a90"/><path d="M0 5 L13 0 H21 V4 L0 10 Z" fill="#c8642e"/><path d="M14 0 H21 V3 Z" fill="#d89088"/><path d="M0 10 L21 6 V12 H0 Z" fill="#6a1820"/></svg>
<div class="t" style="left:255.3px;top:545px;font-size:12px;line-height:15px;color:#1b1b1b;letter-spacing:-0.264px;">TouchKeyboardThemeDark003</div>
<div class="t" style="left:601.6px;top:545px;font-size:12px;line-height:15px;color:#1b1b1b;letter-spacing:-0.318px;">1/13/2023 5:54 PM</div>
<div class="t" style="left:739.6px;top:545px;font-size:12px;line-height:15px;color:#616161;letter-spacing:-0.030px;">Local Disk (C:)\Wi...\touchkeyboard</div>
<svg class="abs" style="left:222px;top:574px;" width="22" height="12" viewBox="0 0 22 12"><defs><radialGradient id="bl" cx=".5" cy=".55" r=".5"><stop offset="0" stop-color="#2a7af0"/><stop offset=".6" stop-color="#1450c8"/><stop offset="1" stop-color="#06164a"/></radialGradient></defs><rect width="21" height="11" fill="#06164a"/><rect width="21" height="11" fill="url(#bl)"/></svg>
<div class="t" style="left:255.3px;top:575px;font-size:12px;line-height:15px;color:#1b1b1b;letter-spacing:-0.003px;">Bloom</div>
<div class="t" style="left:601.6px;top:575px;font-size:12px;line-height:15px;color:#1b1b1b;letter-spacing:-0.266px;">11/2/2022 5:02 PM</div>
<div class="t" style="left:739.6px;top:575px;font-size:12px;line-height:15px;color:#616161;letter-spacing:-0.097px;">Downloads</div>
<svg class="abs" style="left:223px;top:603px;" width="22" height="18" viewBox="0 0 22 18"><defs><linearGradient id="zf" x1="0" y1="0" x2="0.4" y2="1"><stop offset="0" stop-color="#ffd98c"/><stop offset="1" stop-color="#f5b443"/></linearGradient></defs><path d="M0 1.6 Q0 0 1.6 0 H7 L8.8 2 H19.8 Q21 2 21 3.4 V6 H0 Z" fill="#f0a830"/><path d="M0 4 H21 V15.4 Q21 17 19.4 17 H1.6 Q0 17 0 15.4 Z" fill="url(#zf)"/><rect x="4" y="10" width="17" height="1.6" fill="#9aa0a6"/><rect x="0.4" y="8.6" width="4.2" height="5" fill="#c8ccd0" stroke="#8a9096" stroke-width=".6"/><rect x="1.8" y="13.6" width="1.6" height="3" fill="#8a9096"/></svg>
<div class="t" style="left:255.3px;top:605px;font-size:12px;line-height:15px;color:#1b1b1b;letter-spacing:-0.371px;">ViVeTool-v0.2.1</div>
<div class="t" style="left:601.6px;top:605px;font-size:12px;line-height:15px;color:#1b1b1b;letter-spacing:-0.266px;">11/1/2022 9:50 PM</div>
<div class="t" style="left:739.6px;top:605px;font-size:12px;line-height:15px;color:#616161;letter-spacing:-0.097px;">Downloads</div>
<svg class="abs" style="left:222px;top:634px;" width="22" height="13" viewBox="0 0 22 13"><rect x="1" y="1" width="21" height="12" fill="#cfcfcf" opacity=".6"/><rect width="21" height="12" fill="#4a3a4a"/><path d="M3 0 H10 L14 6 L8 12 H2 Z" fill="#7a6aa8"/><path d="M12 2 L19 4 L16 10 L11 8 Z" fill="#b06a5a"/><path d="M0 4 L4 6 L0 10 Z" fill="#c05040"/><path d="M17 0 H21 V6 Z" fill="#2a2a30"/></svg>
<div class="t" style="left:255.3px;top:635px;font-size:12px;line-height:15px;color:#1b1b1b;letter-spacing:-0.489px;">85bb37e2ba65556f7da07047bab330e3534c80a2</div>
<div class="t" style="left:601.6px;top:635px;font-size:12px;line-height:15px;color:#1b1b1b;letter-spacing:-0.300px;">9/22/2022 11:58 PM</div>
<div class="t" style="left:739.6px;top:635px;font-size:12px;line-height:15px;color:#616161;letter-spacing:-0.097px;">Downloads</div>
<svg class="abs" style="left:222px;top:664px;" width="22" height="13" viewBox="0 0 22 13"><rect x="1" y="1" width="21" height="12" fill="#cfcfcf" opacity=".6"/><rect width="21" height="12" fill="#a8663a"/><circle cx="5" cy="4" r="2.4" fill="#6a5a70"/><circle cx="14" cy="7" r="2.8" fill="#c8803a"/><circle cx="10" cy="2" r="1.6" fill="#5a4a5a"/><path d="M0 9 L8 12 H0 Z" fill="#7a4a30"/><circle cx="18" cy="3" r="1.8" fill="#d8a060"/></svg>
<div class="t" style="left:255.3px;top:665px;font-size:12px;line-height:15px;color:#1b1b1b;letter-spacing:-0.506px;">0b3ee7663893cae76e9bd310aee59b70d76cc476</div>
<div class="t" style="left:601.6px;top:665px;font-size:12px;line-height:15px;color:#1b1b1b;letter-spacing:-0.300px;">9/22/2022 11:57 PM</div>
<div class="t" style="left:739.6px;top:665px;font-size:12px;line-height:15px;color:#616161;letter-spacing:-0.097px;">Downloads</div>
<svg class="abs" style="left:222px;top:694px;" width="22" height="13" viewBox="0 0 22 13"><rect x="1" y="1" width="21" height="12" fill="#cfcfcf" opacity=".6"/><rect width="21" height="12" fill="#d88058"/><path d="M0 0 H21 V3 L0 6 Z" fill="#e8a878"/><path d="M12 0 H21 V4 Z" fill="#98a0b8"/><path d="M0 8 L21 5 V12 H0 Z" fill="#c86a48"/></svg>
<div class="t" style="left:255.3px;top:695px;font-size:12px;line-height:15px;color:#1b1b1b;letter-spacing:-0.165px;">TouchKeyboardThemeLight003</div>
<div class="t" style="left:601.6px;top:695px;font-size:12px;line-height:15px;color:#1b1b1b;letter-spacing:-0.203px;">6/10/2022 4:40 AM</div>
<div class="t" style="left:739.6px;top:695px;font-size:12px;line-height:15px;color:#616161;letter-spacing:-0.030px;">Local Disk (C:)\Wi...\touchkeyboard</div>
<svg class="abs" style="left:222px;top:724px;" width="22" height="13" viewBox="0 0 22 13"><rect x="1" y="1" width="21" height="12" fill="#cfcfcf" opacity=".6"/><rect width="21" height="12" fill="#1a3a7a"/><path d="M0 12 L21 1 V4 L3 12 Z" fill="#4a7ac0"/><path d="M9 9 L18 3" stroke="#b8d8f8" stroke-width="1"/><path d="M0 0 H8 L0 5 Z" fill="#2a5aa8"/></svg>
<div class="t" style="left:255.3px;top:725px;font-size:12px;line-height:15px;color:#1b1b1b;letter-spacing:-0.404px;">cf5a73fe0f1f4a0cd58a38b04219a0167354f87f</div>
<div class="t" style="left:601.6px;top:725px;font-size:12px;line-height:15px;color:#1b1b1b;letter-spacing:-0.198px;">6/2/2022 4:55 AM</div>
<div class="t" style="left:739.6px;top:725px;font-size:12px;line-height:15px;color:#616161;letter-spacing:-0.097px;">Downloads</div>
<svg class="abs" style="left:223px;top:753px;" width="22" height="18" viewBox="0 0 22 18"><defs><linearGradient id="zf" x1="0" y1="0" x2="0.4" y2="1"><stop offset="0" stop-color="#ffd98c"/><stop offset="1" stop-color="#f5b443"/></linearGradient></defs><path d="M0 1.6 Q0 0 1.6 0 H7 L8.8 2 H19.8 Q21 2 21 3.4 V6 H0 Z" fill="#f0a830"/><path d="M0 4 H21 V15.4 Q21 17 19.4 17 H1.6 Q0 17 0 15.4 Z" fill="url(#zf)"/><rect x="4" y="10" width="17" height="1.6" fill="#9aa0a6"/><rect x="0.4" y="8.6" width="4.2" height="5" fill="#c8ccd0" stroke="#8a9096" stroke-width=".6"/><rect x="1.8" y="13.6" width="1.6" height="3" fill="#8a9096"/></svg>
<div class="t" style="left:255.3px;top:755px;font-size:12px;line-height:15px;color:#1b1b1b;letter-spacing:-0.127px;">211128-73493-ConfigContextData</div>
<div class="t" style="left:601.6px;top:755px;font-size:12px;line-height:15px;color:#1b1b1b;letter-spacing:-0.318px;">5/28/2022 3:30 PM</div>
<div class="t" style="left:739.6px;top:755px;font-size:12px;line-height:15px;color:#616161;letter-spacing:-0.097px;">Downloads</div>
<svg class="abs" style="left:222px;top:784px;" width="22" height="13" viewBox="0 0 22 13"><rect x="1" y="1" width="21" height="12" fill="#d0d0d0" opacity=".6"/><rect width="21" height="12" fill="#fafbfc"/><rect x="3" y="0" width="15" height="1" fill="#b8b8b8"/><rect x="0" y="0" width="1.2" height="12" fill="#111"/><rect x="19.8" y="0" width="1.2" height="12" fill="#111"/><rect x="0" y="10.6" width="21" height="1.4" fill="#151515"/><rect x="3" y="2.5" width="14" height="5" fill="#eef0f4"/></svg>
<svg class="abs" style="left:205px;top:785px;" width="13" height="13" viewBox="0 0 13 13"><circle cx="6.2" cy="6.2" r="5.3" fill="none" stroke="#3a3a3a" stroke-width="1.1"/><path d="M3.6 6.4 L5.4 8.2 L8.8 4.6" fill="none" stroke="#3a3a3a" stroke-width="1.1"/></svg>
<div class="t" style="left:255.3px;top:785px;font-size:12px;line-height:15px;color:#1b1b1b;letter-spacing:-0.199px;">Research Methodology-20210401_040256-Meeting Recording</div>
<div class="t" style="left:601.6px;top:785px;font-size:12px;line-height:15px;color:#1b1b1b;letter-spacing:-0.198px;">5/7/2022 5:23 AM</div>
<div class="t" style="left:739.6px;top:785px;font-size:12px;line-height:15px;color:#616161;letter-spacing:-0.054px;">A test - Personal\Ak</div>
<svg class="abs" style="left:222px;top:814px;" width="22" height="13" viewBox="0 0 22 13"><rect x="1" y="1" width="21" height="12" fill="#cfcfcf" opacity=".6"/><rect width="21" height="12" fill="#3a90d8"/><path d="M0 0 H10 L6 6 L0 5 Z" fill="#1a6ac0"/><path d="M6 6 L14 3 L17 9 L9 12 H4 Z" fill="#4ab8e8"/><path d="M16 0 H21 V12 H17 Z" fill="#b0b8e0"/><path d="M10 5 L14 7 L11 9 Z" fill="#1a58b0"/></svg>
<div class="t" style="left:255.3px;top:815px;font-size:12px;line-height:15px;color:#1b1b1b;letter-spacing:-0.146px;">TouchKeyboardThemeLight000</div>
<div class="t" style="left:601.6px;top:815px;font-size:12px;line-height:15px;color:#1b1b1b;letter-spacing:-0.266px;">5/1/2022 11:31 PM</div>
<div class="t" style="left:739.6px;top:815px;font-size:12px;line-height:15px;color:#616161;letter-spacing:-0.030px;">Local Disk (C:)\Wi...\touchkeyboard</div>
<svg class="abs" style="left:223px;top:843px;" width="22" height="18" viewBox="0 0 22 18"><path d="M0 1.6 Q0 0 1.6 0 H7 L8.8 2 H19.8 Q21 2 21 3.4 V6 H0 Z" fill="#f6b636"/><rect x="0" y="4" width="21" height="13" rx="1.5" fill="#fbd27a"/></svg>
<div class="t" style="left:255.3px;top:845px;font-size:12px;line-height:15px;color:#1b1b1b;letter-spacing:-0.797px;">OfficeInsiderFeedback-3.6.3</div>
<div class="t" style="left:601.6px;top:845px;font-size:12px;line-height:15px;color:#1b1b1b;letter-spacing:-0.349px;">4/28/2022 10:55 PM</div>
<div class="t" style="left:739.6px;top:845px;font-size:12px;line-height:15px;color:#616161;letter-spacing:-0.097px;">Downloads</div>
</div><!-- 07_details.py -->
<div class="abs" style="left:0;top:0;width:1434px;height:888px;clip-path:inset(163px 28px 40px 961px)"><svg class="abs" style="left:1072px;top:191px;" width="222" height="196" viewBox="0 0 222 196"><defs><linearGradient id="scr" x1="0.1" y1="0" x2="0.9" y2="1"><stop offset="0" stop-color="#3ddbe3"/><stop offset="0.5" stop-color="#22a8d4"/><stop offset="1" stop-color="#0f66c4"/></linearGradient><linearGradient id="nk" x1="0" y1="0" x2="0" y2="1"><stop offset="0" stop-color="#8a9096"/><stop offset="1" stop-color="#a8b0b8"/></linearGradient><linearGradient id="bs" x1="0" y1="0" x2="0" y2="1"><stop offset="0" stop-color="#d0d6dc"/><stop offset="1" stop-color="#aab2ba"/></linearGradient></defs><rect x="1.5" y="1.5" width="219" height="157.5" rx="7" fill="#5a6068"/><rect x="1.5" y="1" width="219" height="3" rx="1.5" fill="#9aa0a8" opacity=".5"/><rect x="5" y="5" width="212" height="150.5" rx="4" fill="url(#scr)"/><rect x="95" y="159" width="32" height="22" fill="url(#nk)"/><path d="M58 186 Q58 178 64 178 H158 Q164 178 164 186 Z" fill="url(#bs)"/><rect x="58" y="186" width="106" height="8.5" fill="#4a4f55"/></svg>
<div class="t" style="left:981.9px;top:440px;font-size:20px;line-height:25px;color:#111;letter-spacing:-0.818px;-webkit-text-stroke:0.55px #111">This PC</div>
<div class="t" style="left:982px;top:497px;font-size:14px;line-height:18px;color:#616161;letter-spacing:-0.236px;">This item is shared</div>
<div class="abs" style="left:982px;top:528px;width:74px;height:31px;border:1px solid #e6e6e6;border-radius:4px;background:#fff;box-shadow:0 1px 0 #dadada"></div>
<div class="abs" style="left:1062px;top:528px;width:117px;height:31px;border:1px solid #e6e6e6;border-radius:4px;background:#fff;box-shadow:0 1px 0 #dadada"></div>
<svg class="abs" style="left:994px;top:538px;" width="12" height="12" viewBox="0 0 12 12"><path d="M3.8 2.4 H2.6 Q1 2.4 1 4 V9.6 Q1 11.2 2.6 11.2 H8.6 Q10.2 11.2 10.2 9.6 V9.2" fill="none" stroke="#444" stroke-width="1"/><path d="M3.6 8.6 Q4.2 5.2 8.4 5 V7 L11.3 4 L8.4 1 V3 Q4 3.4 3.6 8.6 Z" fill="none" stroke="#444" stroke-width="1" stroke-linejoin="round"/></svg>
<div class="t" style="left:1009.8px;top:535px;font-size:14px;line-height:18px;color:#262626;letter-spacing:-0.792px;">Share</div>
<div class="t" style="left:1074.7px;top:535px;font-size:14px;line-height:18px;color:#262626;letter-spacing:-0.427px;">Manage access</div>
<div class="t" style="left:982.4px;top:594px;font-size:14px;line-height:18px;color:#1b1b1b;letter-spacing:0.333px;-webkit-text-stroke:0.45px #1b1b1b">Activity</div>
<svg class="abs" style="left:987px;top:631px;" width="14" height="14" viewBox="0 0 14 14"><path d="M6.6 2.6 H2.4 Q1 2.6 1 4 V9.8 Q1 11.2 2.4 11.2 H6.6 M10.4 2.6 Q12.8 2.6 12.8 4.4 V9.6 Q12.8 11.2 10.6 11.2" fill="none" stroke="#5a8ed6" stroke-width="1"/><path d="M8.6 1 V13 M7 1 H10.2 M7 13 H10.2" stroke="#5a8ed6" stroke-width="1"/><path d="M2.8 9.6 L4.8 4.2 L6.8 9.6 M3.5 7.8 H6.1" fill="none" stroke="#5a8ed6" stroke-width=".9"/></svg>
<div class="abs" style="left:0;top:0;width:1434px;height:888px;clip-path:inset(0 49px 0 0)"><div class="t" style="left:1015.5px;top:631px;font-size:12px;line-height:15px;color:#5c5c5c;letter-spacing:0.148px;">Laura changed the name from My file to My new file with a long name</div>
</div><svg class="abs" style="left:987px;top:660px;" width="14" height="13" viewBox="0 0 14 13"><path d="M4.6 2.2 H3 Q1.2 2.2 1.2 4 V10 Q1.2 11.8 3 11.8 H9.4 Q11.2 11.8 11.2 10 V9.4" fill="none" stroke="#5a8ed6" stroke-width="1"/><path d="M3.8 9 Q4.6 5.2 9 5 V7.3 L12.6 4.2 L9 1 V3.2 Q4.4 3.6 3.8 9 Z" fill="none" stroke="#5a8ed6" stroke-width="1" stroke-linejoin="round"/></svg>
<div class="t" style="left:1015.5px;top:659px;font-size:12px;line-height:15px;color:#5c5c5c;letter-spacing:-0.009px;">Robert shared yesterday at 2:29pm</div>
<svg class="abs" style="left:987px;top:688px;" width="14" height="12" viewBox="0 0 14 12"><path d="M5 1 L1.2 4.6 L5 8.2 M1.4 4.6 H7.4 Q11.8 4.6 12.2 10.6" fill="none" stroke="#5a8ed6" stroke-width="1.1"/></svg>
<div class="t" style="left:1015.5px;top:687px;font-size:12px;line-height:15px;color:#5c5c5c;letter-spacing:0.082px;">Tyler replied to a comment by Edmee on Oct 29</div>
<div class="abs" style="left:982px;top:726px;width:90px;height:31px;border:1px solid #e6e6e6;border-radius:4px;background:#fff;box-shadow:0 1px 0 #dadada"></div>
<div class="t" style="left:994.1px;top:733px;font-size:14px;line-height:18px;color:#5c5c5c;letter-spacing:-0.065px;">View more</div>
<div class="t" style="left:982.4px;top:791px;font-size:14px;line-height:18px;color:#1b1b1b;letter-spacing:-0.247px;-webkit-text-stroke:0.45px #1b1b1b">Related Files</div>
<svg class="abs" style="left:1000px;top:821px;" width="20" height="22" viewBox="0 0 20 22"><path d="M3 1 H11.6 L17 6.4 V9 M3 1 Q1.6 1 1.6 2.4 V9" fill="none" stroke="#222" stroke-width="1.2"/><path d="M11.4 1 V6.6 H17" fill="none" stroke="#222" stroke-width="1.1"/><rect x="1.2" y="9.4" width="17.2" height="8" rx="1.6" fill="none" stroke="#222" stroke-width="1.2"/><path d="M1.6 17.4 V19 Q1.6 20.6 3.2 20.6 H15.6 Q17 20.6 17 19 V17.4" fill="none" stroke="#222" stroke-width="1.2"/><text x="9.8" y="15.8" font-size="5.6" font-family="Liberation Sans" font-weight="700" text-anchor="middle" fill="#222">PDF</text></svg>
<div class="t" style="left:1037.5px;top:823px;font-size:14px;line-height:18px;color:#1b1b1b;letter-spacing:-0.276px;">Company stats press release 2022</div>
</div><!-- 08_status.py -->
<div class="abs" style="left:948px;top:179px;width:2px;height:413px;background:#858585;border-radius:1px"></div>
<div class="t" style="left:42px;top:854px;font-size:12px;line-height:15px;color:#1b1b1b;letter-spacing:-0.169px;">29 items</div>
<div class="abs" style="left:96px;top:853px;width:1px;height:15px;background:#e8e8e8"></div>
<svg class="abs" style="left:1362px;top:854px;" width="14" height="13" viewBox="0 0 14 13"><path d="M1 1.5 H13 M1 4.5 H13 M1 7.5 H13 M1 10.5 H13" stroke="#111" stroke-width="1.2"/></svg>
<svg class="abs" style="left:1384px;top:853px;" width="14" height="15" viewBox="0 0 14 15"><rect x="1.4" y="1.4" width="11.6" height="9.2" fill="none" stroke="#111" stroke-width="1.2"/><path d="M1 13.6 H13.4" stroke="#111" stroke-width="1.2"/></svg>
<!-- 09_cursor.py -->
<svg class="abs" style="left:687px;top:351px;" width="15" height="22" viewBox="0 0 15 22"><path d="M1.5 1.4 V17.2 L5.5 13.9 L8.4 19.5 L10.6 18.4 L7.9 13.2 H12.9 Z" fill="#fff" stroke="#000" stroke-width="1" stroke-linejoin="round"/></svg>

</body></html>
